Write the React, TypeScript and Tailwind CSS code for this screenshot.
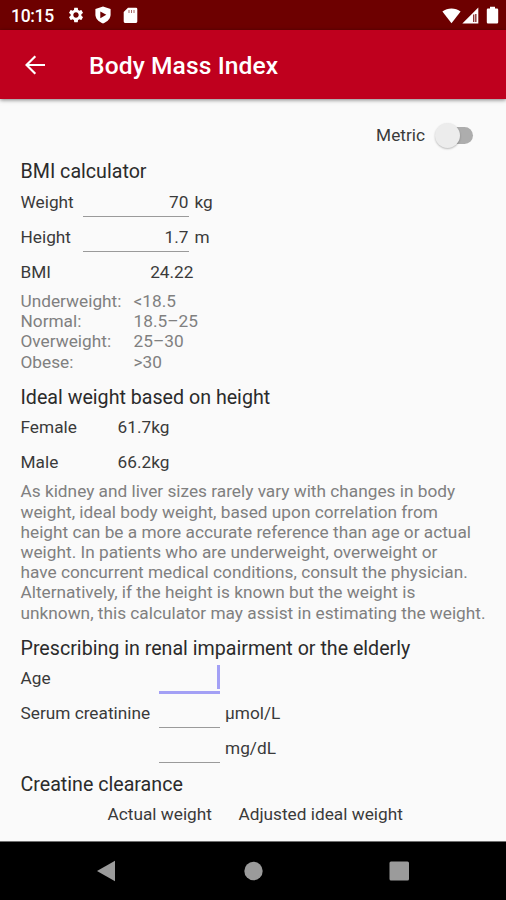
import { useState, type ReactNode } from "react"
import { MdSettings } from "react-icons/md"

const bmiRanges = [
  { label: "Underweight:", range: "<18.5" },
  { label: "Normal:", range: "18.5–25" },
  { label: "Overweight:", range: "25–30" },
  { label: "Obese:", range: ">30" },
]

const idealWeights = [
  { label: "Female", value: "61.7kg" },
  { label: "Male", value: "66.2kg" },
]

const note = [
  "As kidney and liver sizes rarely vary with changes in body",
  "weight, ideal body weight, based upon correlation from",
  "height can be a more accurate reference than age or actual",
  "weight. In patients who are underweight, overweight or",
  "have concurrent medical conditions, consult the physician.",
  "Alternatively, if the height is known but the weight is",
  "unknown, this calculator may assist in estimating the weight.",
]

function StatusBar() {
  return (
    <div className="flex h-[30px] shrink-0 items-center bg-[#6d0000] pl-[11px] pr-[7px] text-white">
      <span className="w-[56px] pt-[3px] text-[17.500px] font-medium leading-none tracking-[-0.300px]">10:15</span>
      <MdSettings className="h-[18px] w-[18px]" />
      <svg className="ml-[9px] h-[18px] w-[18px]" viewBox="0 0 18 18">
        <path fill="#fff" d="M9 .6 16.600 3v5.600c0 4-3 7.200-7.600 8.900C4.400 15.800 1.400 12.600 1.400 8.600V3z" />
        <path fill="#6d0000" d="M6.300 5.400v6.800L12.300 8.800z" />
      </svg>
      <svg className="ml-[11px] h-[17px] w-[15px]" viewBox="0 0 15 17">
        <path fill="#fff" d="M5 .8h8a1.300 1.300 0 0 1 1.300 1.300v12.500a1.300 1.300 0 0 1-1.300 1.300H2A1.300 1.300 0 0 1 .7 14.600V5z" />
        <path stroke="#6d0000" strokeWidth="1" opacity=".6" d="M6 3v3M8.500 3v3M11 3v3" />
      </svg>
      <svg className="ml-auto h-[17px] w-[19px]" viewBox="0 0 19 17">
        <path fill="#fff" d="M9.500 16.300.4 4.600C5.500.4 13.500.4 18.600 4.600z" />
      </svg>
      <svg className="ml-px h-[17px] w-[17px]" viewBox="0 0 17 17">
        <path fill="#fff" d="M16.300.5v16H.3z" />
        <path fill="#6d0000" d="M11.200 7.500h1.100v7.500h-1.100zM13.300 7h1.100v8h-1.100z" />
      </svg>
      <svg className="ml-[7px] h-[18px] w-[13px]" viewBox="0 0 13 18">
        <path fill="#fff" d="M4 .8h5v1.700h2a1.200 1.200 0 0 1 1.200 1.200v12.500a1.200 1.200 0 0 1-1.200 1.200H2A1.200 1.200 0 0 1 .8 16.200V3.700A1.200 1.200 0 0 1 2 2.500h2z" />
      </svg>
    </div>
  )
}

function Heading({ children, className }: { children: ReactNode; className: string }) {
  return <h2 className={`text-[19.650px] leading-[24px] text-[#2b2b2b] ${className}`}>{children}</h2>
}

function Field({ className, value = "", focused = false }: { className: string; value?: string; focused?: boolean }) {
  return (
    <div className={`relative h-full shrink-0 ${className}`}>
      <input
        className="h-full w-full bg-transparent text-right outline-none"
        defaultValue={value}
        inputMode="decimal"
      />
      {focused ? (
        <>
          <span className="absolute right-0 top-[5px] h-6 w-[3px] bg-[#a3a0f5]" />
          <span className="absolute inset-x-0 bottom-[1px] h-[3px] bg-[#a3a0f5]" />
        </>
      ) : (
        <span className="absolute inset-x-0 bottom-[2px] h-[1.500px] bg-[#9a9a9a]" />
      )}
    </div>
  )
}

function Row({ label, labelWidth, children }: { label?: string; labelWidth: string; children?: ReactNode }) {
  return (
    <div className="flex h-[35px] items-center">
      <span className={`shrink-0 ${labelWidth}`}>{label}</span>
      {children}
    </div>
  )
}

function MetricSwitch() {
  const [imperial, setImperial] = useState(false)

  return (
    <div className="mt-[18px] flex h-9 items-center justify-end pr-[33px]">
      <span className="pt-px">Metric</span>
      <button
        role="switch"
        aria-checked={imperial}
        aria-label="Units"
        onClick={() => setImperial(!imperial)}
        className="relative ml-[12px] h-[17px] w-[36px] rounded-full bg-[#adadad]"
      >
        <span
          className={`absolute top-[-4px] h-[25px] w-[25px] rounded-full bg-[#ececec] shadow-[0_1px_2px_rgba(0,0,0,0.25)] ${
            imperial ? "right-[-2px]" : "left-[-2px]"
          }`}
        />
      </button>
    </div>
  )
}

function NavBar() {
  return (
    <div className="flex h-[59px] shrink-0 items-center border-t border-[#707070] bg-black">
      <svg className="h-[22px] w-full" viewBox="0 0 506 22" fill="#9b9b9b">
        <path d="M97 11 115 .7v20.600z" />
        <circle cx="253.500" cy="11" r="9.200" />
        <rect x="389.500" y="1.500" width="19.500" height="19" rx="1.500" />
      </svg>
    </div>
  )
}

export default function App() {
  return (
    <div className="flex h-[900px] w-[506px] flex-col overflow-hidden bg-[#fafafa] font-['Roboto',sans-serif] text-[17.250px] leading-[20.200px] text-[#3a3a3a]">
      <StatusBar />
      <header className="z-10 flex h-[69px] shrink-0 items-center bg-[#bf001e] text-white shadow-[0_1px_4px_rgba(0,0,0,0.5)]">
        <svg className="ml-[25px] h-[20px] w-[20px]" viewBox="0 0 20 20" fill="none" stroke="#fff" strokeWidth="2.200">
          <path d="M20 10H2M10.300 1.200 1.500 10l8.800 8.800" />
        </svg>
        <h1 className="ml-[44px] pt-[4px] text-[24.600px] font-medium leading-none tracking-[0.100px]">Body Mass Index</h1>
      </header>

      <main className="min-h-0 flex-1 pl-[20.500px]">
        <MetricSwitch />

        <Heading className="pt-[7px]">BMI calculator</Heading>
        <Row label="Weight" labelWidth="w-[62px] pt-px">
          <Field className="w-[106px]" value="70" />
          <span className="ml-[6px] pt-px">kg</span>
        </Row>
        <Row label="Height" labelWidth="w-[62px] pt-px">
          <Field className="w-[106px]" value="1.7" />
          <span className="ml-[6px] pt-px">m</span>
        </Row>
        <Row label="BMI" labelWidth="w-[62px] pt-px">
          <span className="w-[111px] pt-px text-right">24.22</span>
        </Row>

        <div className="mt-[2px] grid grid-cols-[113px_auto] text-[#808080]">
          {bmiRanges.map((item) => (
            <div key={item.label} className="contents">
              <span>{item.label}</span>
              <span>{item.range}</span>
            </div>
          ))}
        </div>

        <Heading className="pt-[14px]">Ideal weight based on height</Heading>
        {idealWeights.map((item) => (
          <Row key={item.label} label={item.label} labelWidth="w-[97px]">
            <span>{item.value}</span>
          </Row>
        ))}

        <p className="mt-[1.500px] whitespace-nowrap text-[#808080]">
          {note.map((line) => (
            <span key={line} className="block">{line}</span>
          ))}
        </p>

        <Heading className="-mb-px pt-[14.500px]">Prescribing in renal impairment or the elderly</Heading>
        <Row label="Age" labelWidth="w-[138.500px]">
          <Field className="w-[61px]" focused />
        </Row>
        <Row label="Serum creatinine" labelWidth="w-[138.500px]">
          <Field className="w-[61px]" />
          <span className="ml-[5px]">μmol/L</span>
        </Row>
        <Row labelWidth="w-[138.500px]">
          <Field className="w-[61px]" />
          <span className="ml-[5px]">mg/dL</span>
        </Row>

        <Heading className="-mb-px pt-[8px]">Creatine clearance</Heading>
        <Row labelWidth="w-[87px]">
          <span>Actual weight</span>
          <span className="ml-[26.500px]">Adjusted ideal weight</span>
        </Row>
      </main>

      <NavBar />
    </div>
  )
}
